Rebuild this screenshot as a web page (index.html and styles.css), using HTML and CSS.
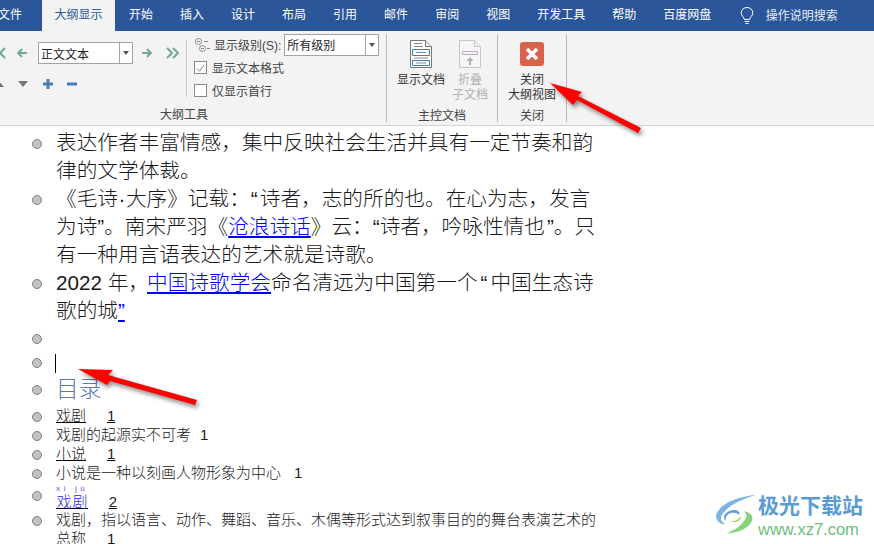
FILE: index.html
```html
<!DOCTYPE html>
<html lang="zh-CN">
<head>
  <meta charset="UTF-8">
  <title>大纲显示</title>
  <link rel="stylesheet" href="styles.css">
</head>
<body>
  <div class="tabs">
    <span class="tab tab-file">文件</span>
    <span class="tab active">大纲显示</span>
    <span class="tab">开始</span>
    <span class="tab">插入</span>
    <span class="tab">设计</span>
    <span class="tab">布局</span>
    <span class="tab">引用</span>
    <span class="tab">邮件</span>
    <span class="tab">审阅</span>
    <span class="tab">视图</span>
    <span class="tab">开发工具</span>
    <span class="tab">帮助</span>
    <span class="tab">百度网盘</span>
    <span class="tell">
      <svg class="bulb" width="14" height="18" viewBox="0 0 14 18"><path d="M4.5 12.5C4 10 1.2 9 1.2 5.8a5.8 5.3 0 0 1 11.6 0C12.8 9 10 10 9.5 12.5zM4.6 14.5h4.8M5.4 16.5h3.2" fill="none" stroke="#fff" stroke-width="1"/></svg>
      操作说明搜索
    </span>
  </div>

  <div class="ribbon">
    <section class="group group-outline">
      <div class="group-body">
        <div class="levels">
          <div class="levels-row">
            <svg class="nudge" width="14" height="12" viewBox="0 0 14 12"><path d="M6 1L1 6l5 5M1 6h8M12 1L7 6l5 5" fill="none" stroke="#6fab97" stroke-width="2"/></svg>
            <svg class="nudge" width="10" height="10" viewBox="0 0 10 10"><path d="M5 1L1.2 5 5 9M2 5h8" fill="none" stroke="#6fab97" stroke-width="2"/></svg>
            <div class="select select-style"><span>正文文本</span><i class="drop"></i></div>
            <svg class="nudge" width="10" height="10" viewBox="0 0 10 10"><path d="M5 1l3.8 4L5 9M8 5H0" fill="none" stroke="#6fab97" stroke-width="2"/></svg>
            <svg class="nudge" width="14" height="12" viewBox="0 0 14 12"><path d="M2 1l5 5-5 5M8 1l5 5-5 5" fill="none" stroke="#6fab97" stroke-width="2"/></svg>
          </div>
          <div class="move-row">
            <i class="tri tri-up"></i>
            <i class="tri tri-down"></i>
            <svg width="10" height="10" viewBox="0 0 10 10"><path d="M5 0v10M0 5h10" stroke="#4a7fb5" stroke-width="3"/></svg>
            <svg width="10" height="10" viewBox="0 0 10 10"><path d="M0 5h10" stroke="#4a7fb5" stroke-width="3"/></svg>
          </div>
        </div>
        <div class="sep"></div>
        <div class="options">
          <div class="option">
            <svg width="16" height="16" viewBox="0 0 16 16"><g fill="none" stroke="#8a8a8a"><circle cx="4.5" cy="4.5" r="3"/><circle cx="8.5" cy="11.5" r="3"/><path d="M3 4.5h3M7 11.5h3M10 4.5h4M13 11.5h3"/></g></svg>
            <span class="level-label">显示级别(S):</span>
            <div class="select select-level"><span>所有级别</span><i class="drop"></i></div>
          </div>
          <label class="option"><i class="check on"><svg width="12" height="12" viewBox="0 0 12 12"><path d="M2 6.5l3 3 5-7" fill="none" stroke="#777" stroke-width="1"/></svg></i>显示文本格式</label>
          <label class="option"><i class="check"></i>仅显示首行</label>
        </div>
      </div>
      <div class="group-name">大纲工具</div>
    </section>

    <section class="group group-master">
      <div class="group-body">
        <div class="big">
          <svg width="22" height="28" viewBox="0 0 22 28"><path d="M.5.5h15l6 6v21H.5z" fill="#fff" stroke="#777"/><path d="M15.5.5v6h6" fill="#e8e8e8" stroke="#777"/><path d="M2.5 9.5h17v6h-17zM2.5 20.5h17v5h-17z" fill="#fff" stroke="#3f7fc1"/><path d="M6 12.5h10M6 23h10M4 3.5h8M4 6.5h9M4 18h14" stroke="#888"/></svg>
          <span>显示文档</span>
        </div>
        <div class="big disabled">
          <svg width="22" height="28" viewBox="0 0 22 28"><path d="M.5.5h15l6 6v21H.5z" fill="#f7f5f7" stroke="#c9c4c9"/><path d="M15.5.5v6h6" fill="#eee" stroke="#c9c4c9"/><path d="M3.5 11.5h15v3h-15z" fill="none" stroke="#b4afb4"/><path d="M11 25v-5" stroke="#b4afb4" stroke-width="2"/><path d="M7.5 21L11 17l3.5 4z" fill="#b4afb4"/></svg>
          <span>折叠<br>子文档</span>
        </div>
      </div>
      <div class="group-name">主控文档</div>
    </section>

    <section class="group group-close">
      <div class="group-body">
        <div class="big">
          <svg width="24" height="24" viewBox="0 0 24 24"><rect width="24" height="24" rx="3" fill="#d9634a"/><path d="M7 7l10 10M17 7L7 17" stroke="#fff" stroke-width="3.6"/></svg>
          <span>关闭<br>大纲视图</span>
        </div>
      </div>
      <div class="group-name">关闭</div>
    </section>
  </div>

  <ul class="outline">
    <li>表达作者丰富情感，集中反映社会生活并具有一定节奏和韵<br>律的文学体裁。</li>
    <li>《毛诗<span class="dot">·</span>大序》记载：<span class="quote-a">“</span>诗者，志的所的也。在心为志，发言<br>为诗”。南宋严羽《<a href="#">沧浪诗话</a>》云：“诗者，吟咏性情也<span class="quote-b">”</span>。只<br>有一种用言语表达的艺术就是诗歌。</li>
    <li>2022 年，<a class="gap" href="#">中国诗歌学会</a>命名清远为中国第一个<span class="quote-c">“</span>中国生态诗<br>歌的城<a href="#">”</a></li>
    <li class="blank"></li>
    <li class="blank"><i class="caret"></i></li>
    <li class="heading">目录</li>
    <li class="toc"><a class="plain" href="#">戏剧<b>1</b></a></li>
    <li class="toc">戏剧的起源实不可考<b class="num">1</b></li>
    <li class="toc"><a class="plain" href="#">小说<b>1</b></a></li>
    <li class="toc">小说是一种以刻画人物形象为中心<b class="num wide">1</b></li>
    <li class="toc ruby-row"><a class="plain" href="#"><ruby class="blue">戏剧<rt>xì jù</rt></ruby><b>2</b></a></li>
    <li class="toc">戏剧，指以语言、动作、舞蹈、音乐、木偶等形式达到叙事目的的舞台表演艺术的<br>总称<b>1</b></li>
  </ul>

  <svg class="arrows" width="874" height="544" viewBox="0 0 874 544">
    <path d="M550 83L582 92 578 96 641 128 638 133 577 100 573 105z" fill="#f00"/>
    <path d="M78 369L113 370 108 375 197 400 195 405 110 381 107 385z" fill="#f00"/>
  </svg>

  <div class="brand">
    <svg width="44" height="42" viewBox="0 0 46 42">
      <path d="M44 1C26 3 8 9 3 20c-3 7 3 12 9 12-5-3-6-7-3-11C14 13 28 6 44 1z" fill="#7fb4e6"/>
      <path d="M12 28c-4-4 0-10 7-11 6-1 9 2 7 5-2-2-5-3-8-2-4 1-6 4-6 8z" fill="#6a9fd8"/>
      <path d="M14 41c12 0 24-6 26-14 1-5-3-8-9-9 3 2 4 5 2 8-3 6-10 11-19 15z" fill="#88d07c"/>
      <path d="M17 28c4 1 9-1 11-5 1 4-5 9-11 5z" fill="#a4d86c"/>
    </svg>
    <div class="brand-text">
      <div class="brand-name">极光下载站</div>
      <div class="brand-url">www.xz7.com</div>
    </div>
  </div>
</body>
</html>
```

FILE: styles.css
```css
* { box-sizing: border-box; }
html, body { height: 100%; }
body {
  margin: 0;
  width: 874px;
  height: 544px;
  overflow: hidden;
  position: relative;
  background: #fff;
  color: #222;
  font-family: "Liberation Sans", "Noto Sans CJK SC", sans-serif;
  font-size: 12px;
}

/* tabs */
.tabs {
  height: 31px;
  background: #2b579a;
  color: #fff;
  display: flex;
  align-items: stretch;
  line-height: 30px;
  white-space: nowrap;
}
.tab { padding: 0 13.5px; }
.tab-file { margin-left: -5px; padding: 0 20px 0 3px; }
.tab.active { background: #f3f3f3; color: #2b579a; padding: 0 12.5px; margin-right: 0.5px; }
.tell { display: flex; align-items: center; gap: 12px; margin-left: 15px; color: #e6ebf3; }

/* ribbon */
.ribbon {
  height: 95px;
  background: #f3f3f3;
  border-bottom: 1px solid #d4d4d4;
  display: flex;
  margin-left: -18px;
  padding-top: 3px;
  color: #444;
}
.group { display: flex; flex-direction: column; border-right: 1px solid #b9b9b9; height: 88px; }
.group-body { flex: 1; display: flex; }
.group-name { height: 20px; line-height: 26px; text-align: center; color: #444; }
.group-outline { width: 405px; }
.group-master { width: 111px; }
.group-close { width: 69px; }

.levels { width: 204px; padding: 8px 0 0 11px; }
.levels-row { display: flex; align-items: center; height: 22px; }
.nudge { flex: none; }
.levels-row .nudge:nth-child(1) { margin-right: 10px; }
.levels-row .nudge:nth-child(2) { margin-right: 11px; }
.levels-row .nudge:nth-child(4) { margin: 0 13px 0 9px; }

.select {
  height: 22px;
  border: 1px solid #a3a3a3;
  background: #fff;
  display: flex;
  align-items: center;
  color: #222;
  position: relative;
}
.select span { flex: 1; padding-left: 2px; }
.select-style { width: 95px; }
.select-level { width: 95px; }
.drop {
  width: 13px;
  height: 20px;
  border-left: 1px solid #a3a3a3;
  position: relative;
}
.drop::after {
  content: "";
  position: absolute;
  left: 3px;
  top: 8px;
  border: 3px solid transparent;
  border-top: 4px solid #555;
}

.move-row { display: flex; align-items: center; gap: 14px; margin: 13px 0 0 21px; height: 14px; }
.tri { width: 0; height: 0; border: 5px solid transparent; }
.tri-up { border-bottom: 6px solid #777; border-top: 0; margin-left: -20px; }
.tri-down { border-top: 6px solid #777; border-bottom: 0; margin-right: 1px; }

.sep { width: 1px; height: 57px; background: #c6c6c6; margin-top: 6px; }

.options { padding: 0 0 0 7px; margin-top: -1px; display: flex; flex-direction: column; }
.option { display: flex; align-items: center; height: 23px; gap: 4px; white-space: nowrap; }
.option .select { margin-left: -1px; }
.check {
  width: 13px;
  height: 13px;
  border: 1px solid #8a8a8a;
  background: #fff;
  display: flex;
  margin-right: 1px;
}
.big {
  display: flex;
  flex-direction: column;
  align-items: center;
  text-align: center;
  line-height: 15px;
  white-space: nowrap;
  padding-top: 6px;
  color: #333;
}
.big svg { height: 28px; flex: none; margin-bottom: 5px; }
.big.disabled { color: #b0b0b0; }
.group-master .group-body { padding-left: 10px; gap: 7px; }
.group-master .big { width: 48px; }
.group-master .big.disabled { width: 36px; }
.group-close .group-body { justify-content: center; }

/* document */
.outline {
  list-style: none;
  margin: 0;
  padding: 3px 0 0 56px;
  width: 640px;
  font-size: 20.67px;
  font-weight: 300;
  line-height: 28px;
  color: #1a1a1a;
  white-space: nowrap;
}
.outline li { position: relative; }
.outline li::before {
  content: "";
  position: absolute;
  left: -24px;
  top: 10px;
  width: 8px;
  height: 8px;
  border-radius: 50%;
  background: #c2c2c2;
  border: 1px solid #808080;
}
.outline a { color: #00f; }
.outline a.gap { margin-left: -2px; }
.dot { margin: 0 0.5px; }
.quote-a { margin: 0 2px 0 1px; }
.quote-b { margin-left: 2px; }
.quote-c { margin: 0 3px 0 3px; }
.outline .blank { height: 24px; }
.outline .blank::before { top: 9px; }
.blank .caret {
  position: absolute;
  left: -1px;
  top: 5px;
  width: 1px;
  height: 19px;
  background: #000;
}
.outline .heading {
  height: 33px;
  padding-top: 2px;
  font-size: 22.67px;
  line-height: 29px;
  color: #5b78a8;
}
.outline .heading::before { top: 12px; }
.outline .toc { font-size: 15px; line-height: 19px; }
.outline .toc::before { top: 6px; }
.toc b { font-weight: 400; margin-left: 21px; }
.toc b.num { margin-left: 9px; }
.toc b.wide { margin-left: 13px; }
.outline a.plain { color: #222; text-decoration-color: #000; }
.outline .blue { color: #2a2aee; }
.outline .ruby-row { height: 28px; padding-top: 10px; }
.outline .ruby-row::before { top: 9px; }
rt { font-size: 8px; color: #5a5af0; letter-spacing: 3.5px; line-height: 8px; }

/* annotations */
.arrows {
  position: absolute;
  left: 0;
  top: 0;
  pointer-events: none;
  filter: drop-shadow(2px 3px 2px rgba(0,0,0,0.45));
}
.brand {
  position: absolute;
  left: 714px;
  top: 493px;
  display: flex;
}
.brand-name {
  font-size: 21px;
  font-weight: 700;
  line-height: 26px;
  color: #5b9bd5;
}
.brand-url {
  font-size: 16.5px;
  line-height: 18px;
  color: #6cc07a;
  margin-top: 1px;
}
```
